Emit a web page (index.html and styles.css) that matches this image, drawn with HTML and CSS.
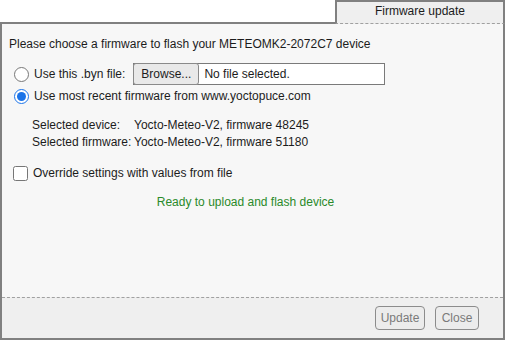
FILE: index.html
```html
<!DOCTYPE html>
<html lang="en">
<head>
    <meta charset="UTF-8">
    <title>Firmware update</title>
    <link rel="stylesheet" href="styles.css">
</head>
<body>
    <div class="dialog">
        <div class="tab-row">
            <div class="tab-fill"></div>
            <div class="tab">Firmware update</div>
        </div>
        <div class="panel">
            <div class="content">
                <p class="intro">Please choose a firmware to flash your METEOMK2-2072C7 device</p>

                <label class="option file-option">
                    <input type="radio" name="source">
                    <span class="option-text">Use this .byn file:</span>
                    <span class="file-box">
                        <span class="browse">Browse...</span>
                        <span class="file-name">No file selected.</span>
                    </span>
                </label>
                <label class="option">
                    <input type="radio" name="source" checked>
                    <span class="option-text">Use most recent firmware from www.yoctopuce.com</span>
                </label>

                <!-- infos sur le device -->
                <div class="info">
                    <span>Selected device:</span>
                    <span>Yocto-Meteo-V2, firmware 48245</span>
                    <span>Selected firmware:</span>
                    <span>Yocto-Meteo-V2, firmware 51180</span>
                </div>

                <label class="option check-option">
                    <input type="checkbox">
                    <span class="option-text">Override settings with values from file</span>
                </label>

                <div class="status">Ready to upload and flash device</div>
            </div>
            <div class="footer">
                <button class="btn btn-update" disabled>Update</button>
                <button class="btn btn-close" disabled>Close</button>
            </div>
        </div>
    </div>
</body>
</html>
```

FILE: styles.css
```css
/* base */
* {
    margin: 0;
    padding: 0;
    box-sizing: border-box;
}

body {
    background-color: #ffffff;
    font-family: 'Liberation Sans', Arial, sans-serif;
    font-size: 12px;
    color: #1c1c1c;
}

.dialog {
    width: 505px;
    height: 340px;
    display: flex;
    flex-direction: column;
}

/* onglet */
.tab-row {
    display: flex;
    height: 24px;
}

.tab-fill {
    flex: 1;
    border-bottom: 2px solid #808080;
}

.tab {
    width: 170px;
    border: 2px solid #808080;
    border-bottom: 1px dashed #a0a0a0;
    background-color: #efefef;
    text-align: center;
    line-height: 19px;
    color: #1c1c1c;
}

.panel {
    flex: 1;
    display: flex;
    flex-direction: column;
    border: 2px solid #808080;
    border-top: none;
    background-color: #f7f7f7;
}

.content {
    flex: 1;
    padding: 13px 7px 0 7px;
}

.intro {
    line-height: 15px;
    margin-bottom: 11px;
}

.option {
    display: flex;
    align-items: center;
    height: 22px;
}

.option input {
    width: 15px;
    height: 15px;
    margin: 0 5px 0 5px;
    accent-color: #1a73e8;
}

.file-box {
    display: flex;
    align-items: center;
    width: 252px;
    height: 22px;
    margin-left: 8px;
    border: 1px solid #7a7a7a;
    background-color: #ffffff;
}

.browse {
    height: 22px;
    width: 66px;
    margin: -1px 0 0 -1px;
    border: 1px solid #8a8a8a;
    border-radius: 3px;
    background-color: #e9e9e9;
    text-align: center;
    line-height: 20px;
}

.file-name {
    margin-left: 5px;
}

.info {
    display: grid;
    grid-template-columns: 104px auto;
    row-gap: 2px;
    margin: 11px 0 0 23px;
    line-height: 15px;
}

.info span:nth-child(even) {
    margin-left: -2px;
}

.check-option {
    margin-top: 12px;
}

.check-option input {
    margin-left: 4px;
}

.status {
    margin-top: 11px;
    padding-right: 14px;
    text-align: center;
    color: #2a8a2a;
    line-height: 15px;
}

/* boutons */
.footer {
    height: 41px;
    display: flex;
    justify-content: flex-end;
    align-items: center;
    gap: 10px;
    padding-right: 24px;
    border-top: 1px dashed #a0a0a0;
    background-color: #efefef;
}

.btn {
    height: 24px;
    padding: 0 4px;
    font-family: 'Liberation Sans', Arial, sans-serif;
    font-size: 12px;
    color: #7a7a7a;
    background-color: #ececec;
    border: 1px solid #8c8c8c;
    border-radius: 4px;
}

.btn-update {
    width: 50px;
}

.btn-close {
    width: 44px;
}
```
